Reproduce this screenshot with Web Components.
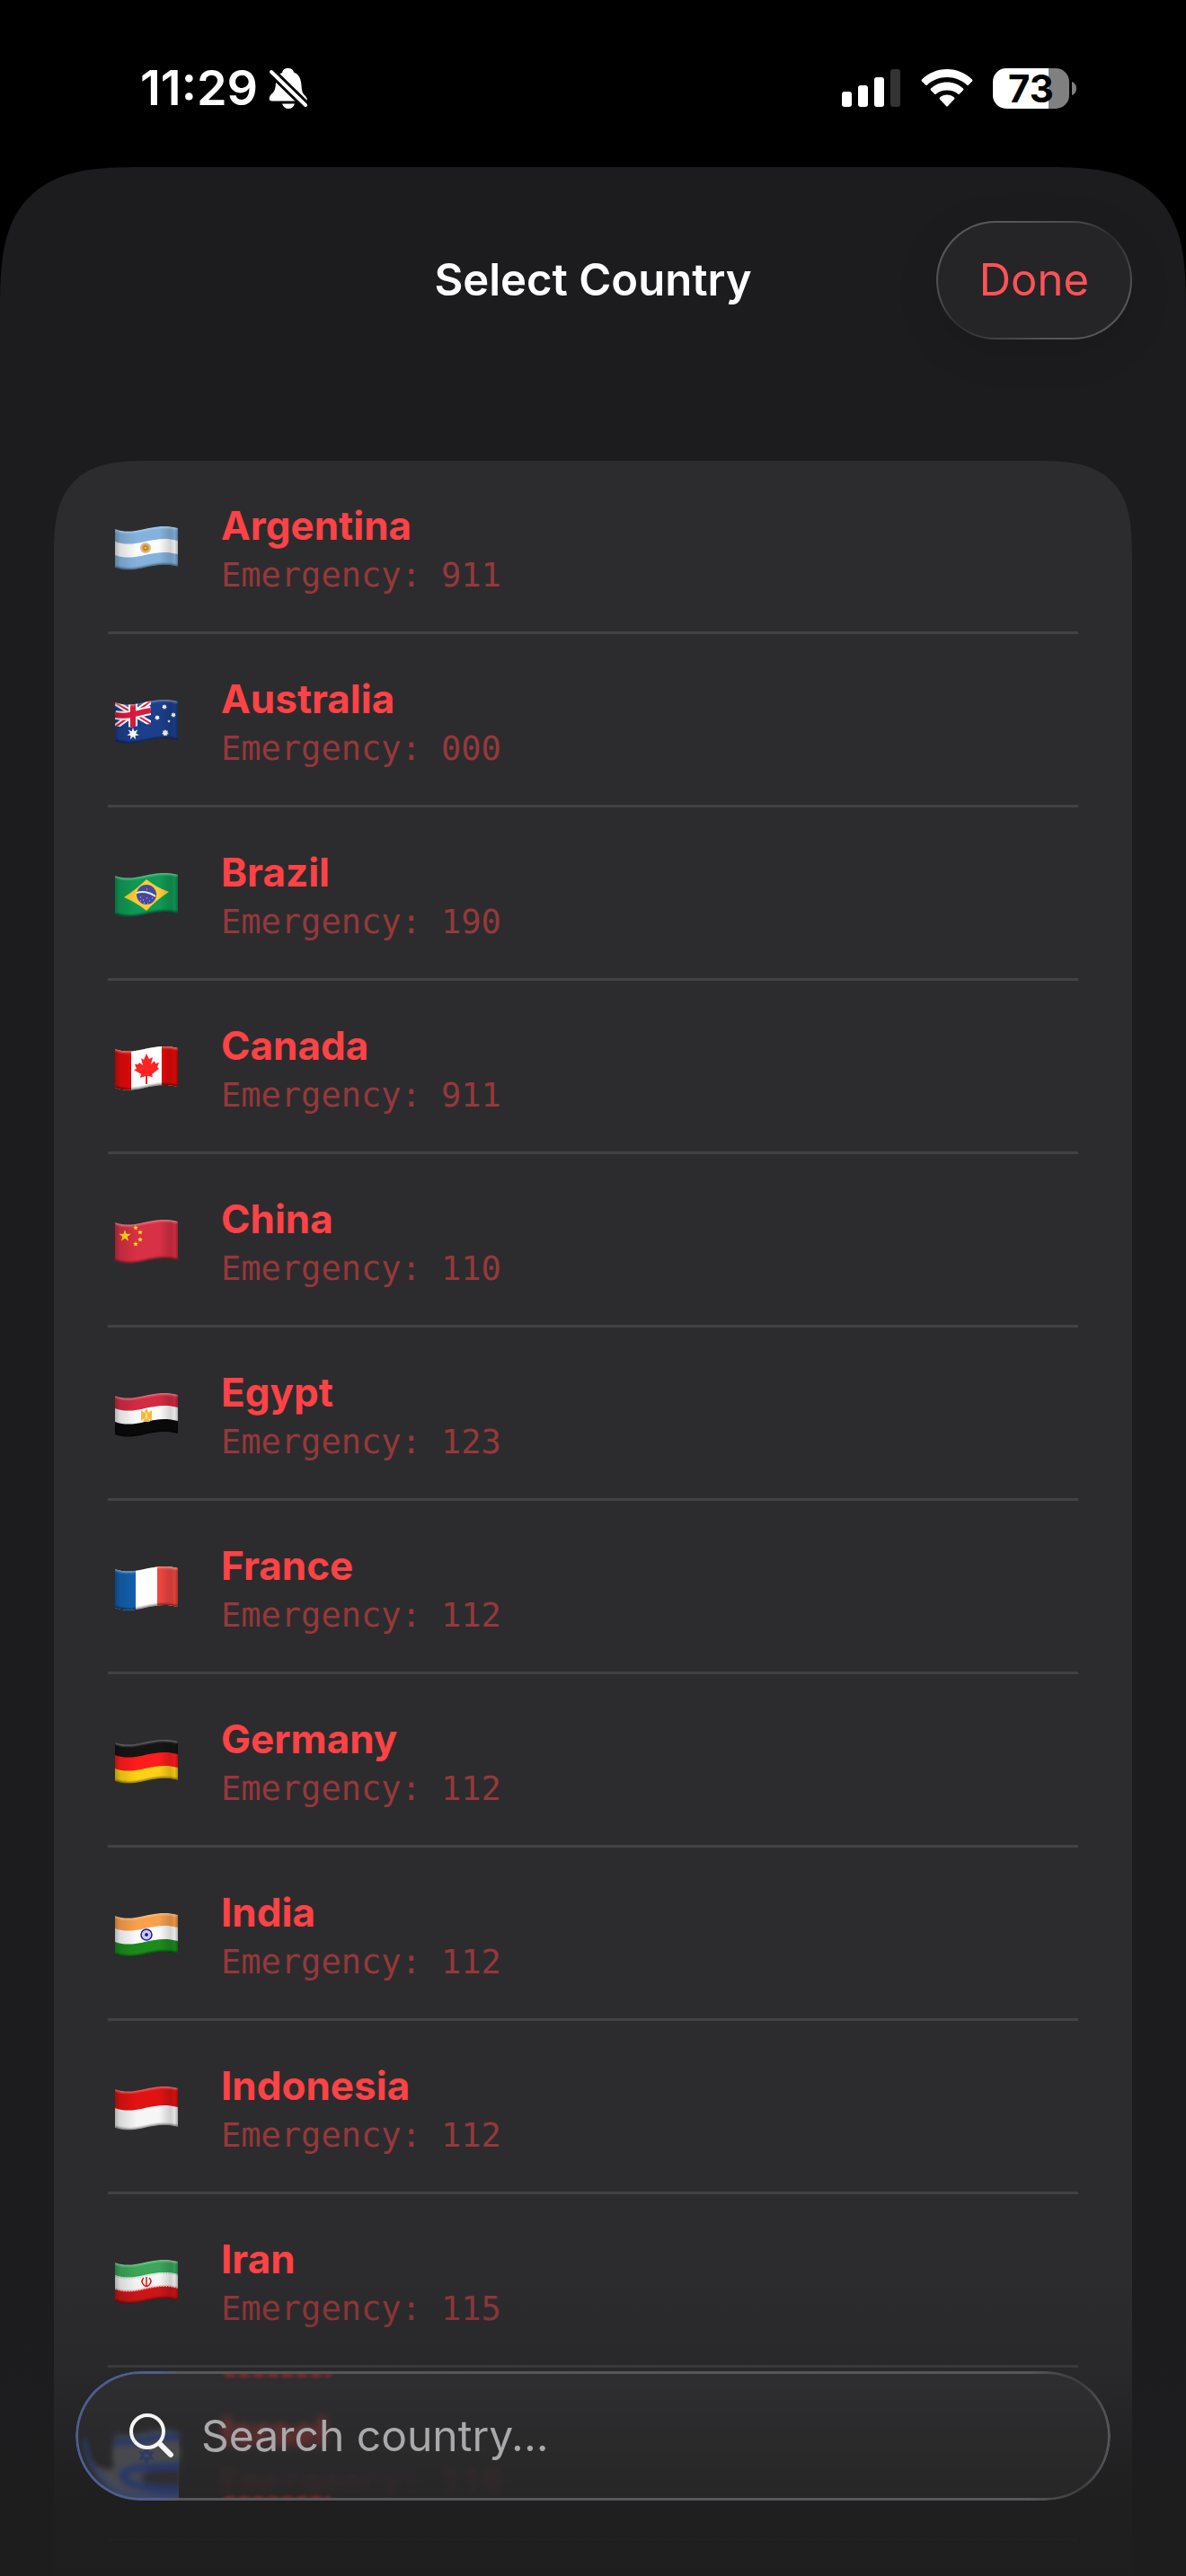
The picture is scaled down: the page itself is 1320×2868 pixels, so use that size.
<!DOCTYPE html>
<html lang="en">
<head>
<meta charset="utf-8">
<meta name="viewport" content="width=device-width, initial-scale=1">
<title>Select Country</title>
<style>
    html, body {
        height: 100%;
        margin: 0;
        background: #000;
        overflow: hidden;
    }
    body {
        font-family: Inter, "Liberation Sans", sans-serif;
        color: #fff;
        --accent: #ff4245;
        --sheet: #1c1c1e;
        --card: #2c2c2e;
        --line: #424244;
    }
</style>
</head>
<body>
<phone-screen>
    <status-bar slot="status" time="11:29" battery="73"></status-bar>
    <sheet-header slot="header">
        Select Country
        <span slot="action">Done</span>
    </sheet-header>
    <country-list></country-list>
    <search-bar slot="search" placeholder="Search country..."></search-bar>
</phone-screen>

<script>
class PhoneScreen extends HTMLElement {
    constructor() {
        super();

        this.attachShadow({mode: "open"});
        this.shadowRoot.innerHTML = `
            <style>
                :host {
                    display: flex;
                    flex-direction: column;
                    height: 100vh;
                    position: relative;
                    overflow: hidden;
                }
                main {
                    flex: 1;
                    min-height: 0;
                    display: flex;
                    flex-direction: column;
                    background: var(--sheet);
                    border-radius: 112px 112px 0 0;
                    overflow: hidden;
                }
                @supports (corner-shape: squircle) {
                    main {
                        border-radius: 160px 160px 0 0;
                        corner-shape: superellipse(1.585);
                    }
                }
                #content {
                    flex: 1;
                    min-height: 0;
                    display: flex;
                    flex-direction: column;
                    padding: 135px 60px 0;
                }
                #fade {
                    position: absolute;
                    inset: auto 0 0 0;
                    height: 340px;
                    background: linear-gradient(rgba(29,29,30,0), rgba(29,29,30,0.25) 34%, rgba(29,29,30,0.86) 74%, rgba(29,29,30,0.93));
                    pointer-events: none;
                }
                #search {
                    position: absolute;
                    inset: auto 84px 84px 84px;
                }
            </style>
            <slot name="status"></slot>
            <main>
                <slot name="header"></slot>
                <div id="content"><slot></slot></div>
            </main>
            <div id="fade"></div>
            <div id="search"><slot name="search"></slot></div>
        `;
    }
}

class StatusBar extends HTMLElement {
    constructor() {
        super();

        this.attachShadow({mode: "open"});
        this.shadowRoot.innerHTML = `
            <style>
                :host {
                    display: flex;
                    justify-content: space-between;
                    align-items: center;
                    box-sizing: border-box;
                    height: 186px;
                    padding: 10px 122px 0 156px;
                }
                div {
                    display: flex;
                    align-items: center;
                }
                #time {
                    font-size: 54px;
                    line-height: 64px;
                    font-weight: 600;
                    margin-right: 12px;
                }
                #right {
                    gap: 22px;
                }
                #battery {
                    gap: 3px;
                }
                #level {
                    justify-content: center;
                    width: 85px;
                    height: 45px;
                    border-radius: 15px;
                    background: linear-gradient(90deg, #fff 73%, #808080 73%);
                    color: #000;
                    font-size: 42px;
                    line-height: 45px;
                    font-weight: 700;
                }
                svg {
                    display: block;
                }
            </style>
            <div>
                <span id="time"></span>
                <svg width="44" height="46" viewBox="0 0 44 46">
                    <path fill="#fff" d="M15 6 C16 2 18 1 21.500 1 C25 1 27 2 28 5.500 C34 8 36 13 36.500 20 C37 28 38 29 41 32 C44 36 43 37.500 40 37.500 L4 37.500 C0 37.500 0 34 2 31 C6 27 7.500 26 8 17 C8.500 11 10 8 15 6 Z"/>
                    <path fill="#fff" d="M15 40.500 H29 C28 44 25.500 46 22 46 C18.500 46 16 44 15 40.500 Z"/>
                    <path stroke="#000" stroke-width="10" d="M1 3 L42 43"/>
                    <path stroke="#fff" stroke-width="4" stroke-linecap="round" d="M3 5 L41 42"/>
                </svg>
            </div>
            <div id="right">
                <svg width="66" height="42" viewBox="0 0 66 42" fill="#fff">
                    <rect x="0" y="25" width="11" height="17" rx="3"/>
                    <rect x="18" y="18" width="11" height="24" rx="3"/>
                    <rect x="36" y="9" width="11" height="33" rx="3"/>
                    <rect x="54" y="0" width="11" height="42" rx="3" fill="#333"/>
                </svg>
                <svg width="58" height="42" viewBox="0 0 58 42" fill="#fff">
                    <path d="M29 0 C40 0 50 4.500 57 11.500 Q58 12.500 57 13.500 L53 17.500 Q52 18.500 51 17.500 C45 12 37.500 9 29 9 C20.500 9 13 12 7 17.500 Q6 18.500 5 17.500 L1 13.500 Q0 12.500 1 11.500 C8 4.500 18 0 29 0 Z"/>
                    <path d="M29 14.500 C36 14.500 42 17 47 21.500 Q48 22.500 47 23.500 L43 27.500 Q42 28.500 41 27.500 C38 25 34 23.500 29 23.500 C24 23.500 20 25 17 27.500 Q16 28.500 15 27.500 L11 23.500 Q10 22.500 11 21.500 C16 17 22 14.500 29 14.500 Z"/>
                    <path d="M29 28.500 C32 28.500 35 29.500 37 31.500 Q38 32.500 37 33.500 L30 41 Q29 42 28 41 L21 33.500 Q20 32.500 21 31.500 C23 29.500 26 28.500 29 28.500 Z"/>
                </svg>
                <div id="battery">
                    <div id="level"></div>
                    <svg width="5" height="15" viewBox="0 0 5 15"><path fill="#808080" d="M0 0 C3 1 5 4 5 7.500 C5 11 3 14 0 15 Z"/></svg>
                </div>
            </div>
        `;
    }
    connectedCallback() {
        this.shadowRoot.getElementById("time").textContent = this.getAttribute("time");
        this.shadowRoot.getElementById("level").textContent = this.getAttribute("battery");
    }
}

class SheetHeader extends HTMLElement {
    constructor() {
        super();

        this.attachShadow({mode: "open"});
        this.shadowRoot.innerHTML = `
            <style>
                :host {
                    display: grid;
                    grid-template-columns: 1fr auto 1fr;
                    align-items: center;
                    padding: 60px 60px 0;
                }
                h1 {
                    grid-column: 2;
                    margin: 0;
                    font-size: 49px;
                    line-height: 64px;
                    font-weight: 600;
                }
                button {
                    justify-self: end;
                    box-sizing: border-box;
                    height: 132px;
                    padding: 0 46px;
                    border: 2px solid transparent;
                    border-radius: 66px;
                    background:
                        linear-gradient(#252527, #252527) padding-box,
                        linear-gradient(150deg, #57575b 20%, #4a4a4d 35%, #2c2c2e 50%, #3a3a3c 60%, #57575b 80%) border-box;
                    box-shadow: 0 12px 50px rgba(0,0,0,0.1);
                    color: #ff5257;
                    font: inherit;
                    font-size: 49px;
                    line-height: 64px;
                }
            </style>
            <h1><slot></slot></h1>
            <button type="button"><slot name="action"></slot></button>
        `;
    }
}

// Every flag is drawn on a 70x50 sheet that waves: band(a, b) fills from height a to b.
const band = (a, b, color) =>
    `<path fill="${color}" d="M0 ${a} C24 ${a + 9} 42 ${a - 9} 70 ${a - 1} V${b - 1} C42 ${b - 9} 24 ${b + 9} 0 ${b} Z"/>`;
const triband = (top, middle, bottom) => band(3, 18, top) + band(17, 33, middle) + band(32, 46, bottom);
const full = (color) => `<rect width="70" height="50" fill="${color}"/>`;
const star = (x, y, r, points, color, inner = 0.45) => {
    let d = "";
    for (let i = 0; i < points * 2; i++) {
        const radius = i % 2 ? r * inner : r;
        const angle = Math.PI * i / points - Math.PI / 2;
        d += `${(x + radius * Math.cos(angle)).toFixed(1)},${(y + radius * Math.sin(angle)).toFixed(1)} `;
    }
    return `<polygon points="${d}" fill="${color}"/>`;
};

const flags = {
    ar: triband("#84b2de", "#fbfbfb", "#84b2de") + `
        <circle cx="34" cy="24" r="6" fill="#d6bda0"/>
        <circle cx="34" cy="24" r="4" fill="#e39a2c"/>
        <circle cx="34" cy="24" r="2" fill="#f6c34f" stroke="#a9702a"/>`,
    au: full("#1c3f8c") + `
        <clipPath id="jack"><path d="M0 0 H40 V27 C28 28 18 33 0 29 Z"/></clipPath>
        <g clip-path="url(#jack)">
            <path d="M-2 2 L42 28 M-2 32 L42 0" stroke="#fff" stroke-width="6"/>
            <path d="M-2 2 L42 28 M-2 32 L42 0" stroke="#e0183c" stroke-width="2"/>
            <path d="M0 17 C14 20 26 14 40 12 M20 0 V32" stroke="#fff" stroke-width="10" fill="none"/>
            <path d="M0 17 C14 20 26 14 40 12 M20 0 V32" stroke="#e0183c" stroke-width="6" fill="none"/>
        </g>`
        + star(20, 38, 7, 7, "#fff") + star(55, 8, 3, 7, "#fff", 0.6) + star(47, 20, 3, 7, "#fff", 0.6)
        + star(65, 17, 3, 7, "#fff", 0.6) + star(60, 24, 2, 5, "#fff") + star(56, 37, 4, 7, "#fff", 0.6),
    br: full("#109a54") + `
        <path fill="#fbcb35" d="M10 27 Q24 18 35 7 Q46 16 60 21 Q46 30 35 42 Q24 33 10 27 Z"/>
        <circle cx="35" cy="24" r="11" fill="#4548a0"/>
        <path d="M24 22 Q35 19 45 26" stroke="#d9f0dc" stroke-width="2" fill="none"/>
        <path d="M28 27 h1 M31 30 h1 M35 28 h1 M38 31 h1 M32 33 h1 M36 34 h1 M41 28 h1 M28 31 h1 M35 18 h1" stroke="#cfd0f0"/>`,
    ca: full("#fff") + `
        <rect width="18" height="50" fill="#e30a0a"/><rect x="52" width="18" height="50" fill="#e30a0a"/>
        <path fill="#ff2323" d="M35 8 L38 14 L42 12 L40 20 L44 16 L45 19 L49 18 L47 23 L49 25 L41 31 L42 34 L36 33 V42 H34 V33 L28 35 L29 31 L21 26 L24 25 L22 20 L26 20 L27 18 L31 21 L29 13 L32 15 Z"/>`,
    cn: full("#d83044") + star(11, 18, 7, 5, "#ffde17", 0.4) + star(23, 9, 3, 5, "#ffde17")
        + star(28, 14, 3, 5, "#ffde17") + star(28, 22, 3, 5, "#ffde17") + star(23, 27, 3, 5, "#ffde17"),
    eg: triband("#d22b42", "#fbfbfb", "#0a0a0a") + `
        <path fill="#f3b93c" d="M29 19 L33 22 L34 18 H36 L37 22 L41 19 V31 L37 28 L39 32 H31 L33 28 L29 31 Z"/>
        <path stroke="#fff6da" d="M35 22 V29"/>`,
    fr: full("#fff") + `<rect width="23" height="50" fill="#1360ae"/><rect x="47" width="23" height="50" fill="#ee473f"/>`,
    de: band(3, 18, "#151515") + band(17, 33, "#ff1c1c") + band(32, 46, "#fdd116"),
    in: triband("#f9a04c", "#fbfbfb", "#1b8c1c") + `
        <circle cx="35" cy="24" r="6" fill="#dcdcf4" stroke="#1a1a9e" stroke-width="1.500"/>
        <circle cx="35" cy="24" r="4" fill="none" stroke="#8888cc" stroke-dasharray="1 1"/>
        <circle cx="35" cy="24" r="2" fill="#1a1a9e"/>`,
    id: band(3, 25, "#e01212") + band(24, 46, "#f6f6f6"),
    ir: triband("#3aa75b", "#fbfbfb", "#d61515") + `
        <path d="M0 18 C24 27 42 9 70 17" stroke="#c8e6d0" stroke-width="2" stroke-dasharray="2 1" fill="none"/>
        <path d="M0 32 C24 41 42 23 70 31" stroke="#f3c4c4" stroke-width="2" stroke-dasharray="2 1" fill="none"/>
        <path d="M35 19 V30 M32 20 Q28 24 32 28 M38 20 Q42 24 38 28 M32 28 Q35 31 38 28" stroke="#d61515" stroke-width="1.500" fill="none"/>`,
    il: full("#fff") + band(7, 15, "#1f4fc4") + band(34, 42, "#1f4fc4") + `
        <path d="M35 17 L41 27 H29 Z M35 31 L29 21 H41 Z" stroke="#1f4fc4" stroke-width="2" fill="none"/>`
};

class CountryFlag extends HTMLElement {
    constructor() {
        super();

        this.attachShadow({mode: "open"});
    }
    connectedCallback() {
        this.shadowRoot.innerHTML = `
            <style>
                :host {
                    display: block;
                    width: 70px;
                    height: 50px;
                }
                svg {
                    display: block;
                }
            </style>
            <svg width="70" height="50" viewBox="0 0 70 50" aria-hidden="true">
                <defs>
                    <clipPath id="cloth"><path d="M0 3 C24 12 42 -6 70 2 V45 C42 37 24 55 0 46 Z"/></clipPath>
                    <linearGradient id="shade">
                        <stop offset="0" stop-opacity="0.28"/>
                        <stop offset="0.08" stop-opacity="0.12"/>
                        <stop offset="0.35" stop-opacity="0"/>
                        <stop offset="0.7" stop-opacity="0"/>
                        <stop offset="0.88" stop-opacity="0.16"/>
                        <stop offset="0.95" stop-opacity="0.08"/>
                        <stop offset="1" stop-opacity="0.3"/>
                    </linearGradient>
                    <filter id="soft"><feGaussianBlur stdDeviation="1"/></filter>
                </defs>
                <g clip-path="url(#cloth)">
                    ${flags[this.getAttribute("code")]}
                    <rect width="70" height="50" fill="url(#shade)"/>
                    <g fill="none" stroke-width="3" filter="url(#soft)">
                        <path stroke="#fff" stroke-opacity="0.4" d="M0 3 C24 12 42 -6 70 2"/>
                        <path stroke="#000" stroke-opacity="0.5" d="M70 45 C42 37 24 55 0 46"/>
                    </g>
                </g>
            </svg>
        `;
    }
}

class CountryRow extends HTMLElement {
    constructor() {
        super();

        this.attachShadow({mode: "open"});
        this.shadowRoot.innerHTML = `
            <style>
                :host {
                    display: block;
                    border-bottom: 3px solid var(--line);
                }
                button {
                    display: flex;
                    align-items: center;
                    gap: 48px;
                    box-sizing: border-box;
                    width: 100%;
                    height: 190px;
                    padding: 6px 8px 0;
                    border: none;
                    background: none;
                    color: var(--accent);
                    font: inherit;
                    text-align: left;
                }
                #text {
                    display: flex;
                    flex-direction: column;
                    gap: 6px;
                }
                #name {
                    font-size: 44px;
                    line-height: 54px;
                    font-weight: 700;
                }
                #number {
                    font-family: "DejaVu Sans Mono", monospace;
                    font-size: 37px;
                    line-height: 46px;
                    color: #96383b;
                }
            </style>
            <button type="button">
                <slot name="flag"></slot>
                <span id="text">
                    <span id="name"><slot></slot></span>
                    <span id="number">Emergency: <slot name="number"></slot></span>
                </span>
            </button>
        `;
    }
}

class CountryList extends HTMLElement {
    constructor() {
        super();

        this.attachShadow({mode: "open"});
        this.countries = [
            {code: "ar", name: "Argentina", number: "911"},
            {code: "au", name: "Australia", number: "000"},
            {code: "br", name: "Brazil", number: "190"},
            {code: "ca", name: "Canada", number: "911"},
            {code: "cn", name: "China", number: "110"},
            {code: "eg", name: "Egypt", number: "123"},
            {code: "fr", name: "France", number: "112"},
            {code: "de", name: "Germany", number: "112"},
            {code: "in", name: "India", number: "112"},
            {code: "id", name: "Indonesia", number: "112"},
            {code: "ir", name: "Iran", number: "115"},
            {code: "il", name: "Israel", number: "110"}
        ];
        this.shadowRoot.innerHTML = `
            <style>
                :host {
                    display: block;
                    flex: 1;
                    padding: 0 60px;
                    background: var(--card);
                    border-radius: 76px 76px 0 0;
                }
                @supports (corner-shape: squircle) {
                    :host {
                        border-radius: 110px 110px 0 0;
                        corner-shape: superellipse(1.585);
                    }
                }
            </style>
            ${this.countries.map(country => `
                <country-row>
                    <country-flag slot="flag" code="${country.code}"></country-flag>
                    ${country.name}
                    <span slot="number">${country.number}</span>
                </country-row>
            `).join("")}
        `;
    }
}

class SearchBar extends HTMLElement {
    constructor() {
        super();

        this.attachShadow({mode: "open"});
        this.shadowRoot.innerHTML = `
            <style>
                :host {
                    display: block;
                }
                label {
                    display: flex;
                    align-items: center;
                    gap: 30px;
                    position: relative;
                    height: 144px;
                    padding: 0 60px;
                    border-radius: 72px;
                    overflow: hidden;
                    background: rgba(84,84,88,0.14);
                    backdrop-filter: blur(5px);
                }
                label::after {
                    content: "";
                    position: absolute;
                    inset: 0;
                    border-radius: 72px;
                    padding: 3px;
                    background:
                        linear-gradient(90deg, rgba(70,100,180,0.6), rgba(70,100,180,0.5) 8%, rgba(70,100,180,0) 10%),
                        linear-gradient(90deg, #57575b 92%, #3c3c3e 97%, #57575b);
                    mask: linear-gradient(#000 0 0) content-box exclude, linear-gradient(#000 0 0);
                    pointer-events: none;
                }
                /* light bent by the rim of the glass */
                #refraction {
                    position: absolute;
                    inset: 0 auto auto 0;
                }
                #icon {
                    position: relative;
                    flex: none;
                }
                input {
                    position: relative;
                    flex: 1;
                    min-width: 0;
                    padding: 0;
                    border: none;
                    outline: none;
                    background: none;
                    color: #fff;
                    font: inherit;
                    font-size: 48px;
                    line-height: 64px;
                }
                input::placeholder {
                    color: #a9a9ab;
                    opacity: 1;
                }
            </style>
            <label>
                <svg id="refraction" width="300" height="144" viewBox="0 0 300 144" aria-hidden="true">
                    <defs>
                        <filter id="blur" x="-20%" y="-20%" width="140%" height="140%"><feGaussianBlur stdDeviation="3"/></filter>
                        <filter id="thin" filterUnits="userSpaceOnUse" x="150" y="-10" width="150" height="164"><feGaussianBlur stdDeviation="2"/></filter>
                        <clipPath id="edge"><rect width="115" height="144"/></clipPath>
                    </defs>
                    <g clip-path="url(#edge)">
                        <g filter="url(#blur)">
                            <path fill="#4a4a4d" d="M44 78 H120 V150 H60 C40 138 20 122 10 90 C20 108 36 114 44 106 Z"/>
                            <path fill="none" stroke="#263866" stroke-width="8" d="M44 79 C70 82 90 70 118 74"/>
                            <path fill="#2f2f33" d="M118 108 C90 108 74 112 72 118 C74 126 90 130 118 130 Z"/>
                            <path fill="none" stroke="#263866" stroke-width="9" d="M118 105 C90 106 56 106 52 116 C56 128 90 134 118 132"/>
                            <path fill="none" stroke="#2b3f75" stroke-width="4" d="M10 76 C14 108 34 136 74 140 H118"/>
                        </g>
                        <path fill="none" stroke="#263866" stroke-width="3" opacity="0.7" d="M79 87 L85 97 H73 Z M79 101 L73 91 H85 Z"/>
                    </g>
                    <g fill="none" stroke="#a3282c" stroke-width="4" stroke-dasharray="12 4" filter="url(#thin)">
                        <path d="M166 4 H284 M166 142 H284"/>
                    </g>
                </svg>
                <svg id="icon" width="50" height="52" viewBox="0 0 50 52" fill="none" stroke="#f5f5f5" stroke-linecap="round" aria-hidden="true">
                    <circle cx="20" cy="21" r="18" stroke-width="4"/>
                    <path stroke-width="6" d="M34 35 L46 47"/>
                </svg>
                <input type="text" aria-label="Search country">
            </label>
        `;
    }
    connectedCallback() {
        this.shadowRoot.querySelector("input").placeholder = this.getAttribute("placeholder");
    }
}

customElements.define("phone-screen", PhoneScreen);
customElements.define("status-bar", StatusBar);
customElements.define("sheet-header", SheetHeader);
customElements.define("country-flag", CountryFlag);
customElements.define("country-row", CountryRow);
customElements.define("country-list", CountryList);
customElements.define("search-bar", SearchBar);
</script>
</body>
</html>
